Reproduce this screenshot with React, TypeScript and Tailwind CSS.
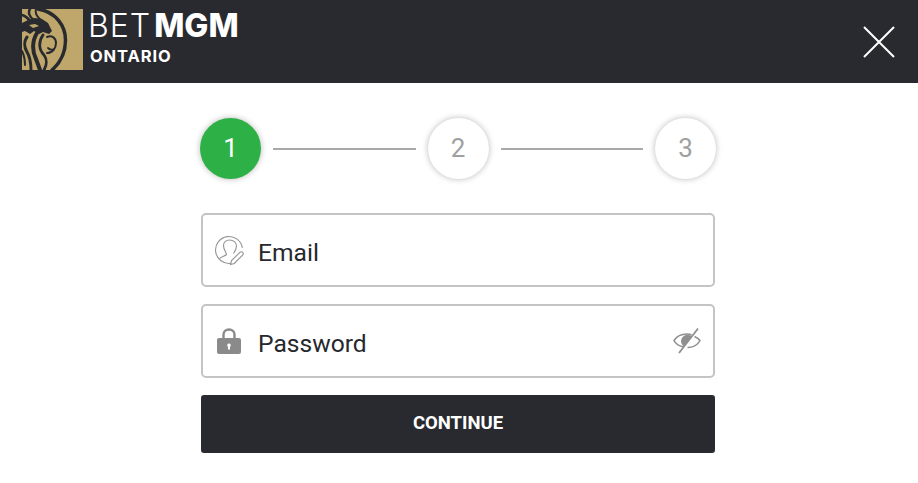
import React from "react";

// gold square, lion head and mane as dark strokes
const LionLogo = () => (
  <svg width="61" height="61" viewBox="0 0 61 61" className="shrink-0">
    <rect width="61" height="61" fill="#bfa76c" />
    <g fill="none" stroke="#282a30" strokeLinecap="round">
      <path d="M16 0C34 3 43.500 17 43.500 31C43.500 44 38 54 30 61" strokeWidth="3.500" />
      <path d="M8 0C6 3 7 8 12 11" strokeWidth="2.500" />
      <path d="M0 6C3 7 6 9 8 12" strokeWidth="2.500" />
      <path d="M14 0C13 4 15 8 19 11" strokeWidth="2" />
      <path d="M15 24C10 32 10 42 14 50C15.500 54 17 58 18 61" strokeWidth="4" />
      <path d="M5 28C2 32 2 38 5 43C8 48 9 55 9 61" strokeWidth="3" />
      <path d="M0 42C2 46 3 51 3 56" strokeWidth="2" />
      <path d="M21 26C16 33 17 41 22 46C25 50 25 56 22 61" strokeWidth="2.800" />
      <path d="M25 28C30 26 34 29 34 34C34 40 30 44 25 44" strokeWidth="2" />
      <path d="M26 39C28 41 30 41 32 40" strokeWidth="1.800" />
    </g>
    <path d="M0 14L6 11L13 9L20 10L26 14L30 22L27 25L21 23L17 25L12 22L8 25L3 22L0 23Z" fill="#282a30" />
    <path d="M7 16L13 15L17 17L11 19Z" fill="#bfa76c" />
  </svg>
);

const UserEditIcon = () => (
  <svg width="30" height="30" viewBox="0 0 30 30" fill="none" stroke="#949494" strokeWidth="1.100">
    <path d="M17 28.300A13.500 13.500 0 1 1 28.400 13" />
    <path d="M5.500 23.500C8 21.500 11 21 12.500 19.500C12.500 17.500 9.500 15 9.500 10.500C9.500 7 12.500 5 15.500 5C19.500 5 22.500 7.500 22.500 11C22.500 14 21 16.500 19.500 18.500" />
    <path d="M16.500 29.500L17.500 25.500L26 17.300C27 16.500 28.200 16.700 28.800 17.500C29.400 18.300 29.400 19.300 28.600 20.100L20.300 28.500Z" fill="#fff" />
  </svg>
);

const LockIcon = () => (
  <svg width="26" height="30" viewBox="0 0 26 30">
    <path d="M7.500 13V8.500C7.500 5.500 10 3.500 13 3.500C16 3.500 18.500 5.500 18.500 8.500V13" fill="none" stroke="#8a8a8a" strokeWidth="2.400" />
    <path fillRule="evenodd" fill="#8a8a8a" d="M3 12H23C24.100 12 25 12.900 25 14V26C25 27.100 24.100 28 23 28H3C1.900 28 1 27.100 1 26V14C1 12.900 1.900 12 3 12ZM13 17.500A1.800 1.800 0 0 0 12 20.800V23.500H14V20.800A1.800 1.800 0 0 0 13 17.500Z" />
  </svg>
);

const EyeOffIcon = () => (
  <svg width="30" height="30" viewBox="0 0 30 30" fill="none" stroke="#8f8f8f" strokeWidth="1.600">
    <path d="M11 20.800C6.800 19.800 3.500 17.500 2 14.500C4.500 10.500 9.500 8 15 8C16.500 8 18 8.200 19.500 8.700" />
    <path d="M22.500 10.500C25 11.500 27 13 28 14.500C26 18.500 21 21.500 15.500 21.500" />
    <path d="M26 2.500L7 27" strokeWidth="1.800" />
    <path d="M20 10L12 20.500C10 19 9 17 9 15C9.500 11.500 12 9 15 9C17 9 18.800 9.300 20 10Z" fill="#8f8f8f" stroke="none" />
  </svg>
);

const Step = ({ n, active }: { n: number; active?: boolean }) => (
  <div
    className={`flex h-[61px] w-[61px] shrink-0 items-center justify-center rounded-full text-[26px] shadow-[0_0_6px_rgba(0,0,0,0.28)] ${
      active ? "bg-[#2db146] text-white" : "bg-white text-[#a0a0a0]"
    }`}
  >
    {n}
  </div>
);

const Line = () => <div className="mx-3 h-[2px] flex-1 bg-[#a8a8a8]" />;

export default function App() {
  return (
    <div className="h-[483px] w-[918px] overflow-hidden bg-white font-['Roboto',sans-serif]">
      <header className="flex h-[83px] items-center justify-between bg-[#282a30] pl-[22px] pr-[23px]">
        <div className="mb-[4px] flex h-[61px] items-start">
          <LionLogo />
          <div className="ml-[5px] flex flex-col font-['Inter',sans-serif] text-white">
            <div className="flex h-[34px] items-center text-[32px] leading-none">
              <span className="font-light tracking-[1px]">BET</span>
              <span className="ml-[3px] font-extrabold">MGM</span>
            </div>
            <div className="mt-[3px] pl-[2px] text-[16.500px] leading-[20px] font-bold tracking-[0.900px]">ONTARIO</div>
          </div>
        </div>
        <svg width="32" height="32" viewBox="0 0 32 32" stroke="#fff" strokeWidth="2">
          <path d="M1 1L31 31M31 1L1 31" />
        </svg>
      </header>

      <main className="ml-[200px] w-[516px] pt-[35px]">
        <div className="flex items-center">
          <Step n={1} active />
          <Line />
          <Step n={2} />
          <Line />
          <Step n={3} />
        </div>

        <form className="ml-[1px] mt-[34px] flex w-[514px] flex-col">
          <div className="flex h-[74px] items-center rounded-[5px] border-2 border-[#c4c4c4] pl-[11px] text-[24.600px] text-[#26282d]">
            <UserEditIcon />
            <span className="ml-[14px] pt-[6px]">Email</span>
          </div>
          <div className="mt-[17px] flex h-[74px] items-center rounded-[5px] border-2 border-[#c4c4c4] pl-[13px] pr-[11px] text-[24.600px] text-[#26282d]">
            <LockIcon />
            <span className="ml-[16px] flex-1 pt-[6px]">Password</span>
            <EyeOffIcon />
          </div>
          <button
            type="button"
            className="mt-[17px] h-[58px] rounded-[3px] bg-[#282a30] text-[18.500px] font-bold text-white"
          >
            CONTINUE
          </button>
        </form>
      </main>
    </div>
  );
}
